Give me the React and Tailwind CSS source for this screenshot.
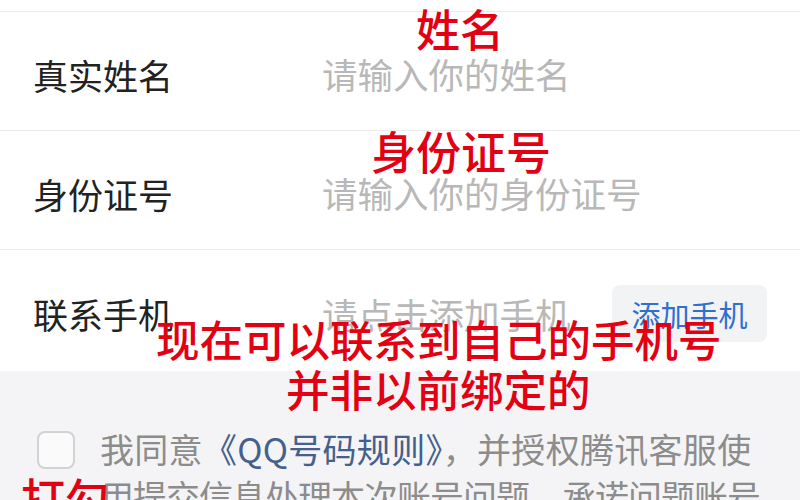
import React from "react";

const font = { fontFamily: '"Noto Sans CJK SC", "Noto Sans", sans-serif' };

function Row({ label, placeholder, height, children, border = true }) {
  return (
    <div
      className={`flex items-center pl-[33px] pr-[33px] ${border ? "border-b border-[#ebebeb]" : ""}`}
      style={{ height }}
    >
      <div className="w-[289px] text-[35px] leading-none text-[#222222] pt-[6px]">{label}</div>
      <div className="flex-1 text-[35.5px] leading-none text-[#b8b8b8] pt-[6px]">{placeholder}</div>
      {children}
    </div>
  );
}

export default function App() {
  return (
    <div className="relative w-[800px] h-[500px] overflow-hidden bg-white" style={font}>
      <div className="h-[12px] border-b border-[#ebebeb]" />
      <Row label="真实姓名" placeholder="请输入你的姓名" height={119} />
      <Row label="身份证号" placeholder="请输入你的身份证号" height={119} />
      <Row label="联系手机" placeholder="请点击添加手机" height={121} border={false}>
        <div className="w-[155px] h-[57px] mt-[6px] rounded-[8px] bg-[#f2f3f5] flex items-center justify-center text-[29px] leading-none text-[#2f6fd0] pt-[2px]">
          添加手机
        </div>
      </Row>
      <div className="h-[129px] bg-[#f4f4f6] pt-[60px] pl-[37px] pr-[20px] flex items-start gap-[25px]">
        <div className="w-[38px] h-[38px] shrink-0 rounded-[8px] border-2 border-[#d2d2d4] bg-[#fafafa]" />
        <div className="flex flex-col text-[34px] leading-[47px] -mt-[6px] text-[#8c8c8c] whitespace-nowrap">
          <span className="tracking-[0.3px]">
            我同意<span className="text-[#44608c]">《QQ号码规则》</span>，并授权腾讯客服使
          </span>
          <span className="tracking-[-1px]">用提交信息处理本次账号问题，承诺问题账号</span>
        </div>
      </div>

      {/* red annotations */}
      <div className="absolute left-[416px] top-[6px] text-[44px] leading-none font-medium text-[#e30012]">姓名</div>
      <div className="absolute left-[371px] top-[128px] text-[45px] leading-none font-medium text-[#e30012]">身份证号</div>
      <div className="absolute left-[156px] top-[317px] text-[43.5px] leading-none font-medium text-[#e30012] whitespace-nowrap">现在可以联系到自己的手机号</div>
      <div className="absolute left-[286px] top-[367px] text-[43.5px] leading-none font-medium text-[#e30012] whitespace-nowrap">并非以前绑定的</div>
      <div className="absolute left-[21px] top-[475px] text-[44px] leading-none font-medium text-[#e30012] whitespace-nowrap">打勾</div>
    </div>
  );
}
